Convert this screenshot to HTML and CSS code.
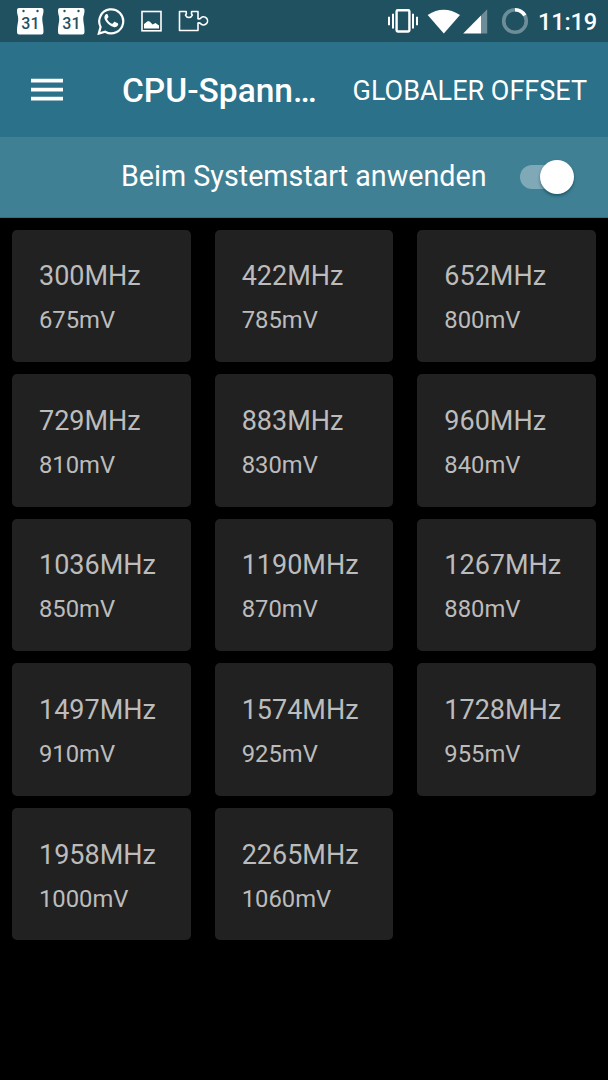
FILE: index.html
```
<!DOCTYPE html>
<html lang="de">
<head>
    <meta charset="UTF-8">
    <meta name="viewport" content="width=device-width, initial-scale=1.0">
    <title>CPU-Spannung</title>
    <link rel="stylesheet" href="styles.css">
</head>
<body>
    <div class="status-bar">
        <div class="notifications">
            <svg class="calendar" width="28" height="28" viewBox="0 0 28 28">
                <path fill="#fff" d="M3 1h22.500q2 0 2 2c0 5-1.200 5-1.200 9s1.200 6 1.200 13q0 2.600-2 2.600H3q-2 0-2-2.600c0-7 1.200-9 1.200-13S1 8 1 3q0-2 2-2z"/>
                <circle class="hole" cx="7.500" cy="4" r="1.200"/>
                <circle class="hole" cx="21.500" cy="4" r="1.200"/>
                <text x="14.400" y="21.500">31</text>
            </svg>
            <svg class="calendar" width="28" height="28" viewBox="0 0 28 28">
                <path fill="#fff" d="M3 1h22.500q2 0 2 2c0 5-1.200 5-1.200 9s1.200 6 1.200 13q0 2.600-2 2.600H3q-2 0-2-2.600c0-7 1.200-9 1.200-13S1 8 1 3q0-2 2-2z"/>
                <circle class="hole" cx="7.500" cy="4" r="1.200"/>
                <circle class="hole" cx="21.500" cy="4" r="1.200"/>
                <text x="14.400" y="21.500">31</text>
            </svg>
            <svg class="whatsapp" width="28" height="28" viewBox="0 0 28 28">
                <path fill="none" stroke="#fff" stroke-width="2.200" d="M1.800 26.600l1.800-6.700A12 12 0 1 1 8.200 24.700z"/>
                <path fill="#fff" d="M10 7.200c-.6-.3-1.300 0-1.800.7-1.300 1.600-1 3.700.2 5.500 2 3.100 4.600 5.600 8.200 6.600 2 .6 3.900-.4 4.500-1.900.3-.9.200-1.500-.3-1.800l-2.700-1.400c-.5-.2-.9-.1-1.200.3l-1.100 1.400c-.3.300-.6.300-1 .1-2-.9-3.500-2.300-4.600-4.200-.2-.4-.1-.7.200-1l.9-1.200c.2-.3.200-.6.100-.9l-1-2.400z"/>
            </svg>
            <svg class="picture" width="21" height="22" viewBox="0 0 21 22">
                <rect x="1" y="1.500" width="19" height="19.300" fill="none" stroke="#fff" stroke-width="1.600"/>
                <path fill="#fff" d="M3 18.500V14l4-3 2 .8 2.500 2.600 3-1.500 3.500 2.700v2.900z"/>
            </svg>
            <svg class="puzzle" width="31" height="24" viewBox="0 0 31 24">
                <path fill="none" stroke="#fff" stroke-width="1.600" stroke-linejoin="round" d="M1.500 2.500h6.700q.6 2-.7 3.700a3.700 3.700 0 0 0 6.800 0q-1.300-1.700-.7-3.700h6.400v7.200q1.800.5 2.900-.8a4 4 0 1 1 0 6q-1.200-1.400-2.900-.8v7.400H1.500z"/>
            </svg>
        </div>
        <div class="system">
            <svg class="vibrate" width="32" height="26" viewBox="0 0 32 26">
                <rect x="9.600" y="2.300" width="12.800" height="21.200" rx="1.200" fill="none" stroke="#fff" stroke-width="2.400"/>
                <path fill="none" stroke="#fff" stroke-width="2" d="M6 5.800v14.800M26 5.800v14.800M2 8.800v8.400M30 8.800v8.400"/>
            </svg>
            <svg class="wifi" width="34" height="26" viewBox="0 0 34 26">
                <path fill="#fff" d="M.7 6Q16.500-4.500 33 6L16.800 24.500z"/>
            </svg>
            <svg class="signal" width="25" height="25" viewBox="0 0 25 25">
                <path fill="#fff" fill-opacity=".35" d="M18 6.500L24.200.3v24.200H18z"/>
                <path fill="#fff" d="M.2 24.500L18 6.500v18z"/>
            </svg>
            <svg class="battery" width="28" height="28" viewBox="0 0 28 28">
                <circle cx="14" cy="14" r="11.300" fill="none" stroke="#fff" stroke-opacity=".35" stroke-width="3.600"/>
                <path fill="none" stroke="#fff" stroke-width="3.600" d="M14 2.700A11.300 11.300 0 0 1 23.800 8.400"/>
            </svg>
            <span class="time">11:19</span>
        </div>
    </div>

    <div class="toolbar">
        <svg class="menu" width="32" height="24" viewBox="0 0 32 24">
            <path fill="#fff" d="M0 .8h32v3.600H0zM0 9.800h32v3.600H0zM0 18.800h32v3.600H0z"/>
        </svg>
        <h1>CPU-Spann…</h1>
        <span class="action">GLOBALER OFFSET</span>
    </div>

    <div class="boot-row">
        <span class="boot-label">Beim Systemstart anwenden</span>
        <div class="switch"><div class="thumb"></div></div>
    </div>

    <main class="grid">
        <div class="card"><h2>300MHz</h2><p>675mV</p></div>
        <div class="card"><h2>422MHz</h2><p>785mV</p></div>
        <div class="card"><h2>652MHz</h2><p>800mV</p></div>
        <div class="card"><h2>729MHz</h2><p>810mV</p></div>
        <div class="card"><h2>883MHz</h2><p>830mV</p></div>
        <div class="card"><h2>960MHz</h2><p>840mV</p></div>
        <div class="card"><h2>1036MHz</h2><p>850mV</p></div>
        <div class="card"><h2>1190MHz</h2><p>870mV</p></div>
        <div class="card"><h2>1267MHz</h2><p>880mV</p></div>
        <div class="card"><h2>1497MHz</h2><p>910mV</p></div>
        <div class="card"><h2>1574MHz</h2><p>925mV</p></div>
        <div class="card"><h2>1728MHz</h2><p>955mV</p></div>
        <div class="card"><h2>1958MHz</h2><p>1000mV</p></div>
        <div class="card"><h2>2265MHz</h2><p>1060mV</p></div>
    </main>
</body>
</html>
```
FILE: styles.css
```
* {
    box-sizing: border-box;
}
body {
    margin: 0;
    min-height: 1080px;
    background-color: #000;
    color: #fff;
    font-family: Roboto, sans-serif;
}
h1, h2, p {
    margin: 0;
}
svg {
    display: block;
    flex: none;
}

/* status bar */
.status-bar {
    display: flex;
    justify-content: space-between;
    height: 42px;
    padding: 0 9px 0 16px;
    background-color: #1f5161;
}
.notifications, .system {
    display: flex;
    align-items: center;
}
.calendar {
    margin-right: 12.500px;
}
.calendar text {
    font-size: 16px;
    font-weight: 500;
    text-anchor: middle;
    fill: #1f5161;
}
.calendar .hole {
    fill: #1f5161;
}
.whatsapp {
    margin-right: 16px;
}
.picture {
    margin-right: 15.500px;
}
.vibrate {
    margin-right: 8px;
}
.wifi {
    margin-right: 2px;
    margin-top: 2px;
}
.signal {
    margin-right: 13px;
    margin-top: 1px;
}
.battery {
    margin-right: 9px;
}
.time {
    width: 61px;
    font-size: 23.600px;
    font-weight: 500;
    line-height: 28px;
    letter-spacing: -0.200px;
    margin-top: 2px;
}

/* toolbar */
.toolbar {
    display: flex;
    align-items: center;
    height: 95px;
    padding: 0 21px 0 31px;
    background-color: #2a7189;
}
.menu {
    margin-right: 59px;
}
h1 {
    font-size: 33.500px;
    font-weight: 500;
    line-height: 40px;
    margin-top: 3px;
    white-space: nowrap;
}
.action {
    margin-left: auto;
    margin-top: 2px;
    font-size: 27px;
    line-height: 32px;
    white-space: nowrap;
}

/* apply on boot */
.boot-row {
    display: flex;
    align-items: center;
    height: 81px;
    padding-left: 121px;
    background-color: #408094;
    border-bottom: 1px solid #2a7189;
}
.boot-label {
    width: 398.500px;
    margin-top: -2px;
    font-size: 28.700px;
    line-height: 32px;
    white-space: nowrap;
}
.switch {
    display: flex;
    align-items: center;
    justify-content: flex-end;
    width: 48px;
    height: 24px;
    border-radius: 12px;
    background-color: #7fa9b7;
}
.thumb {
    flex: none;
    width: 34px;
    height: 34px;
    margin-right: -6px;
    border-radius: 50%;
    background-color: #fff;
    box-shadow: 0 2px 3px rgba(0, 50, 70, 0.5);
}

/* voltage cards */
.grid {
    display: grid;
    grid-template-columns: repeat(3, 1fr);
    grid-auto-rows: 132.500px;
    gap: 12.100px 24px;
    padding: 11.500px 12px;
}
.card {
    padding: 30.700px 27px 0;
    border-radius: 5px;
    background-color: #212121;
    color: #bcbcbc;
}
.card h2 {
    font-size: 27px;
    font-weight: 400;
    line-height: 32px;
}
.card p {
    margin-top: 14px;
    font-size: 23.800px;
    line-height: 28px;
}
```
